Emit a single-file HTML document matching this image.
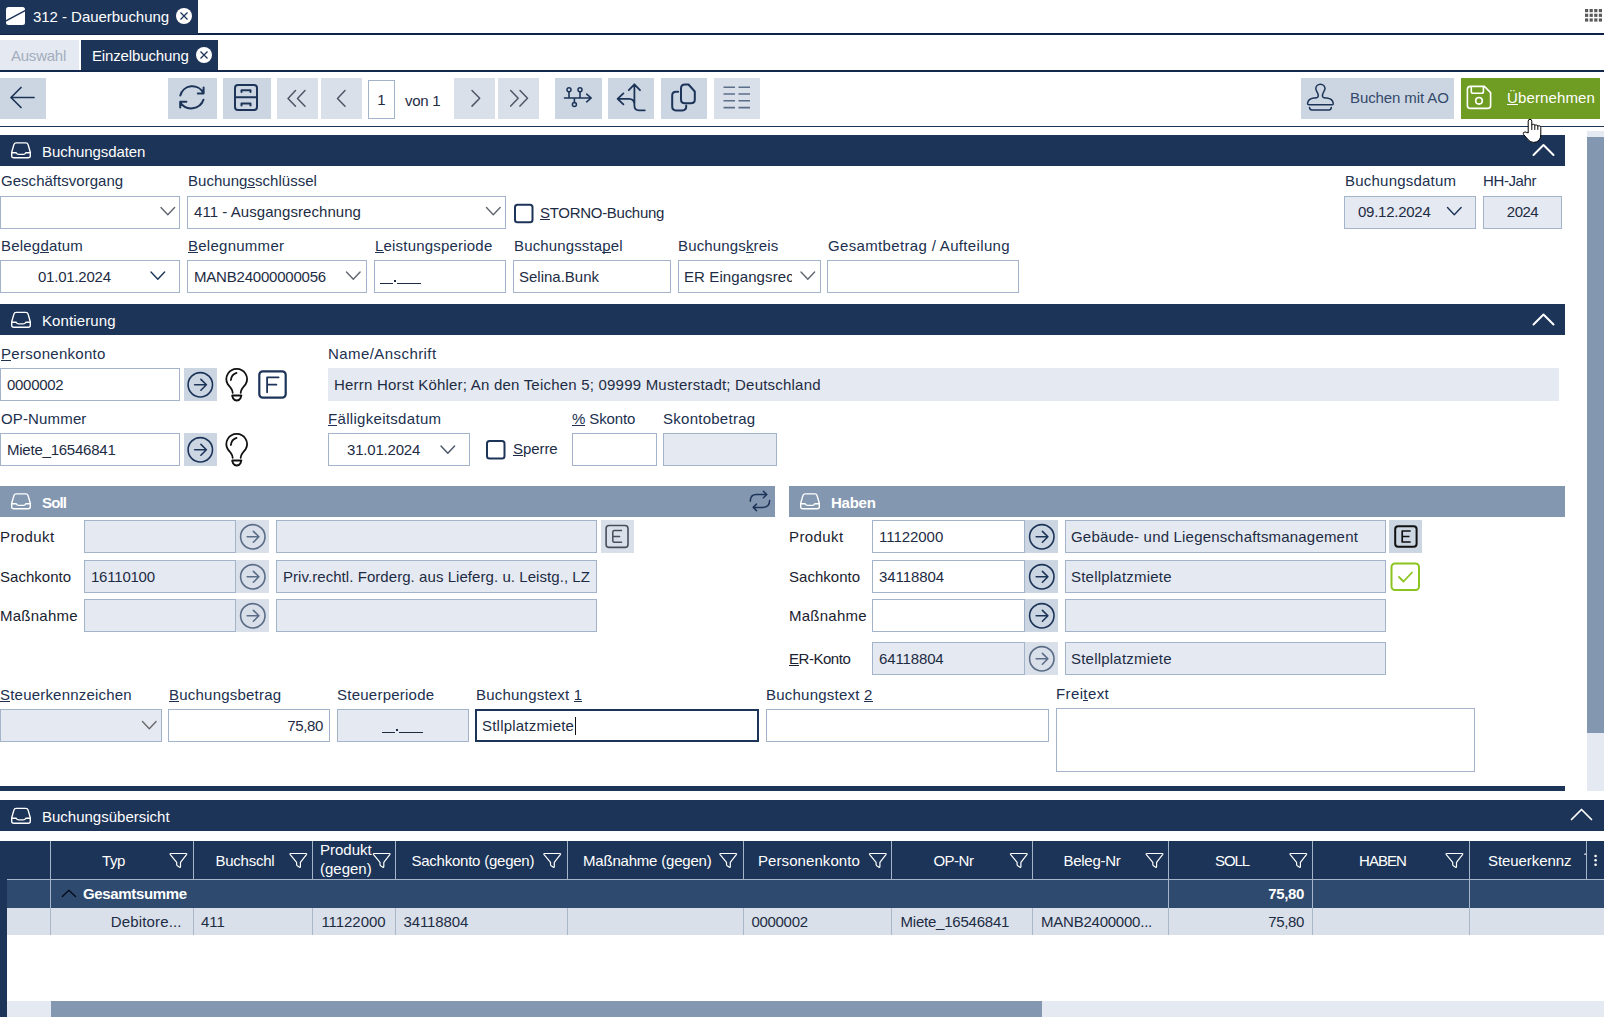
<!DOCTYPE html>
<html><head><meta charset="utf-8">
<style>
html,body{margin:0;padding:0;width:1610px;height:1025px;overflow:hidden;background:#fff;}
body{font-family:"Liberation Sans",sans-serif;font-size:15px;color:#1d2c44;position:relative;}
.a{position:absolute;}
.t{position:absolute;white-space:nowrap;line-height:17px;height:17px;}
.lbl{color:#20304e;}
.w{color:#fff;}
.nv{background:#1c3458;}
.inp{position:absolute;box-sizing:border-box;border:1px solid #a3b3c9;background:#fff;}
.dis{background:#e5e9f1;}
.btn{position:absolute;background:#ccd6e2;}
.btnl{position:absolute;background:#dae0e9;}
.u{background:linear-gradient(currentColor,currentColor) no-repeat 0 15px/100% 1px;}
svg{position:absolute;overflow:visible;}
</style></head><body>

<!-- top tab bar -->
<div class="a" style="left:0;top:33px;width:1604px;height:2px;background:#0c2247;"></div>
<div class="a nv" style="left:0;top:0;width:198px;height:34px;"></div>
<svg style="left:6px;top:7px" width="19" height="18" viewBox="0 0 19 18"><rect x="0" y="0" width="19" height="18" rx="2.5" fill="#fff"/><line x1="-1" y1="14.4" x2="20" y2="3.2" stroke="#1c3458" stroke-width="1.5"/></svg>
<div class="t w" style="left:33px;top:8px;letter-spacing:-0.04px;">312 - Dauerbuchung</div>
<svg style="left:176px;top:8px" width="16" height="16" viewBox="0 0 16 16"><circle cx="8" cy="8" r="8" fill="#fff"/><path d="M4.5 4.5L11.5 11.5M11.5 4.5L4.5 11.5" stroke="#1c3458" stroke-width="1.25"/></svg>
<svg style="left:1585px;top:9px" width="18" height="14" viewBox="0 0 18 14"><g fill="#5a5a5a"><rect x="0" y="0" width="3.2" height="3.2"/><rect x="4.6" y="0" width="3.2" height="3.2"/><rect x="9.2" y="0" width="3.2" height="3.2"/><rect x="13.8" y="0" width="3.2" height="3.2"/><rect x="0" y="4.7" width="3.2" height="3.2"/><rect x="4.6" y="4.7" width="3.2" height="3.2"/><rect x="9.2" y="4.7" width="3.2" height="3.2"/><rect x="13.8" y="4.7" width="3.2" height="3.2"/><rect x="0" y="9.4" width="3.2" height="3.2"/><rect x="4.6" y="9.4" width="3.2" height="3.2"/><rect x="9.2" y="9.4" width="3.2" height="3.2"/><rect x="13.8" y="9.4" width="3.2" height="3.2"/></g></svg>

<!-- second tab bar -->
<div class="a" style="left:0;top:40px;width:79px;height:30px;background:#e5e9f1;"></div>
<div class="t" style="left:11px;top:47px;color:#a2adbd;letter-spacing:-0.24px;">Auswahl</div>
<div class="a nv" style="left:81px;top:40px;width:137px;height:31px;"></div>
<div class="t w" style="left:92px;top:47px;letter-spacing:-0.14px;">Einzelbuchung</div>
<svg style="left:196px;top:47px" width="16" height="16" viewBox="0 0 16 16"><circle cx="8" cy="8" r="8" fill="#fff"/><path d="M4.5 4.5L11.5 11.5M11.5 4.5L4.5 11.5" stroke="#1c3458" stroke-width="1.25"/></svg>
<div class="a" style="left:0;top:70px;width:1604px;height:2px;background:#12284c;"></div>

<!-- toolbar -->
<div class="btn" style="left:0;top:78px;width:46px;height:41px;"></div>
<div class="btn" style="left:168px;top:78px;width:49px;height:41px;"></div>
<div class="btn" style="left:223px;top:78px;width:48px;height:41px;"></div>
<div class="btnl" style="left:277px;top:78px;width:41px;height:41px;"></div>
<div class="btnl" style="left:321px;top:78px;width:41px;height:41px;"></div>
<div class="inp" style="left:368px;top:80px;width:27px;height:39px;"></div>
<div class="t" style="left:368px;top:91px;width:27px;text-align:center;">1</div>
<div class="t" style="left:405px;top:92px;letter-spacing:-0.26px;">von 1</div>
<div class="btnl" style="left:454px;top:78px;width:41px;height:41px;"></div>
<div class="btnl" style="left:498px;top:78px;width:41px;height:41px;"></div>
<div class="btn" style="left:555px;top:78px;width:47px;height:41px;"></div>
<div class="btn" style="left:608px;top:78px;width:46px;height:41px;"></div>
<div class="btn" style="left:661px;top:78px;width:46px;height:41px;"></div>
<div class="btnl" style="left:714px;top:78px;width:46px;height:41px;"></div>
<div class="btn" style="left:1301px;top:78px;width:153px;height:41px;"></div>
<div class="t" style="left:1350px;top:89px;color:#34496a;letter-spacing:-0.10px;">Buchen mit AO</div>
<div class="a" style="left:1461px;top:78px;width:139px;height:41px;background:#6f9c22;"></div>
<div class="t w" style="left:1507px;top:89px;letter-spacing:0.13px;"><span class="u">Ü</span>bernehmen</div>
<div class="a" style="left:0;top:126px;width:1604px;height:1px;background:#1c3458;"></div>

<!-- ===== Buchungsdaten ===== -->
<div class="a nv" style="left:0;top:135px;width:1565px;height:31px;"></div>
<div class="t w" style="left:42px;top:143px;letter-spacing:-0.07px;">Buchungsdaten</div>
<div class="t lbl" style="left:1px;top:172px;letter-spacing:0.03px;">Geschäftsvorgang</div>
<div class="t lbl" style="left:188px;top:172px;letter-spacing:0.03px;">Buchung<span class="u">s</span>schlüssel</div>
<div class="t lbl" style="left:1345px;top:172px;letter-spacing:0.22px;">Buchungsdatum</div>
<div class="t lbl" style="left:1483px;top:172px;letter-spacing:-0.39px;">HH-Jahr</div>
<div class="inp" style="left:0;top:196px;width:180px;height:33px;"></div>
<div class="inp" style="left:187px;top:196px;width:319px;height:33px;"></div>
<div class="t" style="left:194px;top:203px;letter-spacing:0.06px;">411 - Ausgangsrechnung</div>
<div class="t" style="left:540px;top:204px;letter-spacing:-0.29px;"><span class="u">S</span>TORNO-Buchung</div>
<div class="inp dis" style="left:1344px;top:196px;width:132px;height:33px;"></div>
<div class="t" style="left:1358px;top:203px;letter-spacing:-0.26px;">09.12.2024</div>
<div class="inp dis" style="left:1483px;top:196px;width:79px;height:33px;"></div>
<div class="t" style="left:1483px;top:203px;width:79px;text-align:center;letter-spacing:-0.52px;">2024</div>

<div class="t lbl" style="left:1px;top:237px;letter-spacing:0.20px;">Beleg<span class="u">d</span>atum</div>
<div class="t lbl" style="left:188px;top:237px;letter-spacing:0.26px;"><span class="u">B</span>elegnummer</div>
<div class="t lbl" style="left:375px;top:237px;letter-spacing:0.20px;"><span class="u">L</span>eistungsperiode</div>
<div class="t lbl" style="left:514px;top:237px;letter-spacing:0.14px;">Buchungssta<span class="u">p</span>el</div>
<div class="t lbl" style="left:678px;top:237px;letter-spacing:0.15px;">Buchungs<span class="u">k</span>reis</div>
<div class="t lbl" style="left:828px;top:237px;letter-spacing:0.34px;">Gesamtbetrag / Aufteilung</div>
<div class="inp" style="left:0;top:260px;width:180px;height:33px;"></div>
<div class="t" style="left:38px;top:268px;letter-spacing:-0.23px;">01.01.2024</div>
<div class="inp" style="left:187px;top:260px;width:180px;height:33px;"></div>
<div class="t" style="left:194px;top:268px;letter-spacing:-0.21px;">MANB24000000056</div>
<div class="inp" style="left:374px;top:260px;width:132px;height:33px;"></div>
<div class="a" style="left:380.3px;top:283px;width:12.300000000000011px;height:1px;background:#1d2c44;"></div><div class="a" style="left:394px;top:280px;width:2px;height:2px;background:#1d2c44;"></div><div class="a" style="left:396.6px;top:283px;width:24.5px;height:1px;background:#1d2c44;"></div>
<div class="inp" style="left:513px;top:260px;width:158px;height:33px;"></div>
<div class="t" style="left:519px;top:268px;">Selina.Bunk</div>
<div class="inp" style="left:678px;top:260px;width:143px;height:33px;"></div>
<div class="t" style="left:684px;top:268px;width:108px;overflow:hidden;letter-spacing:0.1px;">ER Eingangsrechnung</div>
<div class="inp" style="left:827px;top:260px;width:192px;height:33px;"></div>
<!-- scrollbar right -->
<div class="a" style="left:1587px;top:131px;width:17px;height:660px;background:#e5e9f1;"></div>
<div class="a" style="left:1587px;top:137px;width:17px;height:596px;background:#8497b1;"></div>

<!-- ===== Kontierung ===== -->
<div class="a nv" style="left:0;top:304px;width:1565px;height:31px;"></div>
<div class="t w" style="left:42px;top:312px;letter-spacing:0.12px;">Kontierung</div>
<div class="t lbl" style="left:1px;top:345px;letter-spacing:0.29px;"><span class="u">P</span>ersonenkonto</div>
<div class="t lbl" style="left:328px;top:345px;letter-spacing:0.43px;">Name/Anschrift</div>
<div class="inp" style="left:0;top:368px;width:180px;height:33px;"></div>
<div class="t" style="left:7px;top:376px;letter-spacing:-0.29px;">0000002</div>
<div class="btn" style="left:184px;top:368px;width:33px;height:33px;"></div>
<div class="a dis" style="left:328px;top:368px;width:1231px;height:33px;"></div>
<div class="t" style="left:334px;top:376px;letter-spacing:0.21px;">Herrn Horst Köhler; An den Teichen 5; 09999 Musterstadt; Deutschland</div>
<div class="t lbl" style="left:1px;top:410px;letter-spacing:0.15px;">OP-Nummer</div>
<div class="t lbl" style="left:328px;top:410px;letter-spacing:0.31px;"><span class="u">F</span>älligkeitsdatum</div>
<div class="t lbl" style="left:572px;top:410px;letter-spacing:-0.13px;"><span class="u">%</span> Skonto</div>
<div class="t lbl" style="left:663px;top:410px;letter-spacing:0.26px;">Skontobetrag</div>
<div class="inp" style="left:0;top:433px;width:180px;height:33px;"></div>
<div class="t" style="left:7px;top:441px;letter-spacing:-0.23px;">Miete_16546841</div>
<div class="btn" style="left:184px;top:433px;width:33px;height:33px;"></div>
<div class="inp" style="left:328px;top:433px;width:142px;height:33px;"></div>
<div class="t" style="left:347px;top:441px;letter-spacing:-0.19px;">31.01.2024</div>
<div class="t" style="left:513px;top:440px;letter-spacing:-0.07px;"><span class="u">S</span>perre</div>
<div class="inp" style="left:572px;top:433px;width:85px;height:33px;"></div>
<div class="inp dis" style="left:663px;top:433px;width:114px;height:33px;"></div>

<!-- ===== Soll / Haben ===== -->
<div class="a" style="left:0;top:486px;width:775px;height:31px;background:#8497b1;"></div>
<div class="t w" style="left:42px;top:494px;font-weight:bold;letter-spacing:-0.83px;">Soll</div>
<div class="a" style="left:789px;top:486px;width:776px;height:31px;background:#8497b1;"></div>
<div class="t w" style="left:831px;top:494px;font-weight:bold;letter-spacing:-0.25px;">Haben</div>
<div class="t" style="left:0;top:528px;color:#1a2230;letter-spacing:0.40px;">Produkt</div>
<div class="inp dis" style="left:84px;top:520px;width:152px;height:33px;"></div>
<div class="btnl" style="left:236px;top:520px;width:33px;height:33px;"></div>
<div class="inp dis" style="left:276px;top:520px;width:321px;height:33px;"></div>
<div class="t" style="left:789px;top:528px;color:#1a2230;letter-spacing:0.40px;">Produkt</div>
<div class="inp" style="left:872px;top:520px;width:153px;height:33px;"></div>
<div class="btn" style="left:1025px;top:520px;width:33px;height:33px;"></div>
<div class="inp dis" style="left:1065px;top:520px;width:321px;height:33px;"></div>
<div class="t" style="left:0;top:568px;color:#1a2230;letter-spacing:0.03px;">Sachkonto</div>
<div class="inp dis" style="left:84px;top:560px;width:152px;height:33px;"></div>
<div class="btnl" style="left:236px;top:560px;width:33px;height:33px;"></div>
<div class="inp dis" style="left:276px;top:560px;width:321px;height:33px;"></div>
<div class="t" style="left:789px;top:568px;color:#1a2230;letter-spacing:0.03px;">Sachkonto</div>
<div class="inp" style="left:872px;top:560px;width:153px;height:33px;"></div>
<div class="btn" style="left:1025px;top:560px;width:33px;height:33px;"></div>
<div class="inp dis" style="left:1065px;top:560px;width:321px;height:33px;"></div>
<div class="t" style="left:0;top:607px;color:#1a2230;letter-spacing:0.24px;">Maßnahme</div>
<div class="inp dis" style="left:84px;top:599px;width:152px;height:33px;"></div>
<div class="btnl" style="left:236px;top:599px;width:33px;height:33px;"></div>
<div class="inp dis" style="left:276px;top:599px;width:321px;height:33px;"></div>
<div class="t" style="left:789px;top:607px;color:#1a2230;letter-spacing:0.24px;">Maßnahme</div>
<div class="inp" style="left:872px;top:599px;width:153px;height:33px;"></div>
<div class="btn" style="left:1025px;top:599px;width:33px;height:33px;"></div>
<div class="inp dis" style="left:1065px;top:599px;width:321px;height:33px;"></div>
<div class="btnl" style="left:601px;top:520px;width:33px;height:33px;"></div>
<div class="t" style="left:91px;top:568px;letter-spacing:-0.22px;">16110100</div>
<div class="t" style="left:283px;top:568px;letter-spacing:0.06px;">Priv.rechtl. Forderg. aus Lieferg. u. Leistg., LZ</div>
<div class="t" style="left:879px;top:528px;letter-spacing:-0.04px;">11122000</div>
<div class="t" style="left:879px;top:568px;letter-spacing:-0.08px;">34118804</div>
<div class="t" style="left:1071px;top:528px;letter-spacing:0.19px;">Gebäude- und Liegenschaftsmanagement</div>
<div class="t" style="left:1071px;top:568px;letter-spacing:0.21px;">Stellplatzmiete</div>
<div class="btn" style="left:1389px;top:520px;width:33px;height:33px;"></div>
<div class="t" style="left:789px;top:650px;color:#1a2230;letter-spacing:-0.47px;"><span class="u">E</span>R-Konto</div>
<div class="inp dis" style="left:872px;top:642px;width:153px;height:33px;"></div>
<div class="btnl" style="left:1025px;top:642px;width:33px;height:33px;"></div>
<div class="inp dis" style="left:1065px;top:642px;width:321px;height:33px;"></div>
<div class="t" style="left:879px;top:650px;letter-spacing:-0.13px;">64118804</div>
<div class="t" style="left:1071px;top:650px;letter-spacing:0.21px;">Stellplatzmiete</div>

<!-- bottom row -->
<div class="t lbl" style="left:0;top:686px;letter-spacing:0.20px;"><span class="u">S</span>teuerkennzeichen</div>
<div class="t lbl" style="left:169px;top:686px;letter-spacing:0.22px;"><span class="u">B</span>uchungsbetrag</div>
<div class="t lbl" style="left:337px;top:686px;letter-spacing:0.24px;">Steuerperiode</div>
<div class="t lbl" style="left:476px;top:686px;letter-spacing:0.21px;">Buchungstext <span class="u">1</span></div>
<div class="t lbl" style="left:766px;top:686px;letter-spacing:0.23px;">Buchungstext <span class="u">2</span></div>
<div class="t lbl" style="left:1056px;top:685px;letter-spacing:0.38px;">Frei<span class="u">t</span>ext</div>
<div class="inp dis" style="left:0;top:709px;width:162px;height:33px;"></div>
<div class="inp" style="left:168px;top:709px;width:162px;height:33px;"></div>
<div class="t" style="left:168px;top:717px;width:155px;text-align:right;letter-spacing:-0.37px;">75,80</div>
<div class="inp dis" style="left:337px;top:709px;width:132px;height:33px;"></div>
<div class="a" style="left:382.3px;top:732px;width:12.300000000000011px;height:1px;background:#1d2c44;"></div><div class="a" style="left:395.8px;top:729px;width:2px;height:2px;background:#1d2c44;"></div><div class="a" style="left:398.6px;top:732px;width:24.5px;height:1px;background:#1d2c44;"></div>
<div class="inp" style="left:475px;top:709px;width:284px;height:33px;border:2px solid #1c3458;"></div>
<div class="t" style="left:482px;top:717px;letter-spacing:0.21px;">Stllplatzmiete<span style="display:inline-block;width:1px;height:18px;background:#111;vertical-align:-4px;margin-left:1px;"></span></div>
<div class="inp" style="left:766px;top:709px;width:283px;height:33px;"></div>
<div class="inp" style="left:1056px;top:708px;width:419px;height:64px;"></div>
<div class="a nv" style="left:0;top:786px;width:1565px;height:5px;"></div>

<!-- ===== Buchungsuebersicht ===== -->
<div class="a nv" style="left:0;top:800px;width:1604px;height:31px;"></div>
<div class="t w" style="left:42px;top:808px;">Buchungsübersicht</div>
<div class="a nv" style="left:0;top:841px;width:1604px;height:38px;"></div>
<div class="a nv" style="left:0;top:879px;width:7px;height:138px;"></div>
<div class="a" style="left:7px;top:879px;width:1597px;height:29px;background:#2e4a6e;"></div>
<div class="a" style="left:7px;top:908px;width:1597px;height:27px;background:#d9e0ea;"></div>
<div class="a" style="left:7px;top:1001px;width:44px;height:16px;background:#e5e9f1;"></div>
<div class="a" style="left:51px;top:1001px;width:991px;height:16px;background:#8497b1;"></div>
<div class="a" style="left:1042px;top:1001px;width:562px;height:16px;background:#e5e9f1;"></div>
<div class="a" style="left:7px;top:879px;width:1597px;height:1px;background:#a6b5c9;"></div>
<div class="a" style="left:49.5px;top:841px;width:1px;height:38px;background:#a6b5c9;"></div>
<div class="a" style="left:49.5px;top:908px;width:1px;height:27px;background:#a9b7c9;"></div>
<div class="a" style="left:193.2px;top:841px;width:1px;height:38px;background:#a6b5c9;"></div>
<div class="a" style="left:193.2px;top:908px;width:1px;height:27px;background:#a9b7c9;"></div>
<div class="a" style="left:311.5px;top:841px;width:1px;height:38px;background:#a6b5c9;"></div>
<div class="a" style="left:311.5px;top:908px;width:1px;height:27px;background:#a9b7c9;"></div>
<div class="a" style="left:394.5px;top:841px;width:1px;height:38px;background:#a6b5c9;"></div>
<div class="a" style="left:394.5px;top:908px;width:1px;height:27px;background:#a9b7c9;"></div>
<div class="a" style="left:566.9px;top:841px;width:1px;height:38px;background:#a6b5c9;"></div>
<div class="a" style="left:566.9px;top:908px;width:1px;height:27px;background:#a9b7c9;"></div>
<div class="a" style="left:742.9px;top:841px;width:1px;height:38px;background:#a6b5c9;"></div>
<div class="a" style="left:742.9px;top:908px;width:1px;height:27px;background:#a9b7c9;"></div>
<div class="a" style="left:890.9px;top:841px;width:1px;height:38px;background:#a6b5c9;"></div>
<div class="a" style="left:890.9px;top:908px;width:1px;height:27px;background:#a9b7c9;"></div>
<div class="a" style="left:1031.8px;top:841px;width:1px;height:38px;background:#a6b5c9;"></div>
<div class="a" style="left:1031.8px;top:908px;width:1px;height:27px;background:#a9b7c9;"></div>
<div class="a" style="left:1168.1px;top:841px;width:1px;height:38px;background:#a6b5c9;"></div>
<div class="a" style="left:1168.1px;top:908px;width:1px;height:27px;background:#a9b7c9;"></div>
<div class="a" style="left:1311.8px;top:841px;width:1px;height:38px;background:#a6b5c9;"></div>
<div class="a" style="left:1311.8px;top:908px;width:1px;height:27px;background:#a9b7c9;"></div>
<div class="a" style="left:1468.9px;top:841px;width:1px;height:38px;background:#a6b5c9;"></div>
<div class="a" style="left:1468.9px;top:908px;width:1px;height:27px;background:#a9b7c9;"></div>
<div class="a" style="left:1585.7px;top:841px;width:1px;height:38px;background:#a6b5c9;"></div>
<div class="a" style="left:49.5px;top:880px;width:1px;height:28px;background:#a6b5c9;"></div>
<div class="a" style="left:1168.1px;top:880px;width:1px;height:28px;background:#a6b5c9;"></div>
<div class="a" style="left:1311.8px;top:880px;width:1px;height:28px;background:#a6b5c9;"></div>
<div class="a" style="left:1468.9px;top:880px;width:1px;height:28px;background:#a6b5c9;"></div>
<div class="t w" style="left:102px;top:852px;letter-spacing:-0.40px;">Typ</div>
<div class="t w" style="left:215.5px;top:852px;letter-spacing:-0.25px;">Buchschl</div>
<div class="t w" style="left:411.4px;top:852px;letter-spacing:-0.23px;">Sachkonto (gegen)</div>
<div class="t w" style="left:583px;top:852px;letter-spacing:-0.20px;">Maßnahme (gegen)</div>
<div class="t w" style="left:758px;top:852px;letter-spacing:0.08px;">Personenkonto</div>
<div class="t w" style="left:933.4px;top:852px;letter-spacing:-0.50px;">OP-Nr</div>
<div class="t w" style="left:1063.4px;top:852px;letter-spacing:-0.25px;">Beleg-Nr</div>
<div class="t w" style="left:1215px;top:852px;letter-spacing:-1.09px;">SOLL</div>
<div class="t w" style="left:1359px;top:852px;letter-spacing:-0.94px;">HABEN</div>
<div class="t w" style="left:1488px;top:852px;letter-spacing:-0.08px;">Steuerkennz</div>
<div class="t w" style="left:320px;top:841px;line-height:18.5px;height:38px;">Produkt<br>(gegen)</div>
<div class="t w" style="left:83px;top:885px;font-weight:bold;letter-spacing:-0.34px;">Gesamtsumme</div>
<div class="t w" style="left:1168px;top:885px;width:136px;text-align:right;font-weight:bold;letter-spacing:-0.37px;">75,80</div>
<div class="t" style="left:50px;top:913px;width:131.7px;text-align:right;letter-spacing:0.16px;">Debitore...</div>
<div class="t" style="left:201px;top:913px;">411</div>
<div class="t" style="left:321.4px;top:913px;letter-spacing:-0.04px;">11122000</div>
<div class="t" style="left:403.4px;top:913px;letter-spacing:-0.08px;">34118804</div>
<div class="t" style="left:751.4px;top:913px;letter-spacing:-0.29px;">0000002</div>
<div class="t" style="left:900.6px;top:913px;letter-spacing:-0.23px;">Miete_16546841</div>
<div class="t" style="left:1041px;top:913px;letter-spacing:-0.23px;">MANB2400000...</div>
<div class="t" style="left:1168.6px;top:913px;width:135.4px;text-align:right;letter-spacing:-0.37px;">75,80</div>
<!-- FORM5 -->




<svg id="ov" style="left:0;top:0" width="1610" height="1025" viewBox="0 0 1610 1025" fill="none" stroke-linecap="round" stroke-linejoin="round">
<defs>
<g id="tray"><path d="M0.7 10.2L2.9 2.6Q3.4 0.9 5.2 0.9H14.8Q16.6 0.9 17.1 2.6L19.3 10.2V13.7Q19.3 15.7 17.3 15.7H2.7Q0.7 15.7 0.7 13.7ZM0.7 10.7H5.2Q6 12.4 7.6 12.4H12.4Q14 12.4 14.8 10.7H19.3" stroke-width="1.4"/></g>
<g id="dd"><path d="M0.5 0.5L7.3 7.7L14.1 0.5" stroke-width="1.4"/></g>
<g id="arr"><circle cx="13.3" cy="13.3" r="12.2" stroke-width="1.6"/><path d="M7.7 13.3H19.4M13.9 7.9L19.4 13.3L13.9 18.7" stroke-width="1.6"/></g>
<g id="bulb"><path d="M7.2 24.3Q7.2 22.3 5.5 19.8L2.2 15.6A10.3 10.3 0 1 1 20.2 15.6L16.9 19.8Q15.2 22.3 15.2 24.3M6.6 27H15.9L15 29.8Q13.8 32 11.25 32Q8.7 32 7.5 29.8ZM5.4 11.5Q6 6 11 4.4" stroke-width="1.8"/></g>
<g id="flt"><path d="M1.2 0.5H16.4Q17.7 0.5 16.9 1.6L10.9 9.3V13.6Q10.9 14.6 10 14.2L7.8 12.8Q7.1 12.3 7.1 11.5V9.3L0.7 1.6Q0 0.5 1.2 0.5Z" stroke-width="1.2"/></g>
</defs>
<use href="#tray" x="11" y="142" stroke="#fff"/>
<path d="M1533.5 155L1543.5 145L1553.5 155" stroke="#fff" stroke-width="2"/>
<use href="#dd" x="160.5" y="207" stroke="#606670"/>
<use href="#dd" x="486" y="207" stroke="#606670"/>
<use href="#dd" x="150.5" y="271.5" stroke="#1c3458"/>
<use href="#dd" x="346" y="271.5" stroke="#606670"/>
<use href="#dd" x="800.5" y="271.5" stroke="#606670"/>
<use href="#dd" x="1447" y="207" stroke="#1c3458"/>
<rect x="515" y="204.7" width="17.5" height="17.5" rx="2.5" stroke="#1c3458" stroke-width="2"/>
<use href="#tray" x="11" y="311.5" stroke="#fff"/>
<path d="M1533.5 324.5L1543.5 314.5L1553.5 324.5" stroke="#fff" stroke-width="2"/>
<use href="#arr" x="187" y="371.5" stroke="#1c3458"/>
<use href="#arr" x="187" y="436.5" stroke="#1c3458"/>
<use href="#bulb" x="225.5" y="368.5" stroke="#111"/>
<use href="#bulb" x="225.5" y="433.5" stroke="#111"/>
<rect x="259.3" y="371.3" width="26.4" height="26.4" rx="3.5" stroke="#1c3458" stroke-width="2.2"/>
<path d="M267.1 392.3V377.3H278.6M267.1 384.7H276.4" stroke="#1c3458" stroke-width="1.8" stroke-linecap="round"/>
<use href="#dd" x="440.5" y="445.5" stroke="#4a5568"/>
<rect x="487" y="441" width="17.5" height="17.5" rx="2.5" stroke="#1c3458" stroke-width="2"/>
<use href="#tray" x="11" y="493" stroke="#fff"/>
<use href="#tray" x="800" y="493" stroke="#fff"/>
<use href="#arr" x="239.5" y="523.5" stroke="#5b6d88"/>
<use href="#arr" x="239.5" y="563.5" stroke="#5b6d88"/>
<use href="#arr" x="239.5" y="602.5" stroke="#5b6d88"/>
<use href="#arr" x="1028.5" y="523.5" stroke="#1c3458"/>
<use href="#arr" x="1028.5" y="563.5" stroke="#1c3458"/>
<use href="#arr" x="1028.5" y="602.5" stroke="#1c3458"/>
<use href="#arr" x="1028.5" y="645.5" stroke="#5b6d88"/>
<rect x="606.1" y="525.5" width="21.9" height="21.9" rx="3" stroke="#464e5c" stroke-width="1.6"/>
<path d="M621.5 530.4H614.3Q612.8 530.4 612.8 531.9V540.8Q612.8 542.3 614.3 542.3H621.5M612.8 536.5H619.6" stroke="#464e5c" stroke-width="1.5"/>
<rect x="1395.2" y="526.3" width="21.4" height="20.4" rx="3" stroke="#111" stroke-width="2"/>
<path d="M1410.7 531H1402.2V542H1410.7M1402.2 536.5H1409.5" stroke="#111" stroke-width="1.7" stroke-linecap="butt"/>
<rect x="1391.5" y="563.5" width="27.5" height="26.5" rx="3.5" stroke="#8cc41f" stroke-width="2"/>
<path d="M1399 577L1403.5 581.5L1412 572.5" stroke="#8cc41f" stroke-width="1.8"/>
<path d="M750.3 501.2C750.3 497 752.5 494.5 756.5 494.5H766.8M763.4 491.3L766.8 494.5L763.4 497.7M769.6 500.6C769.6 504.5 767.5 507.4 763 507.4H753.2M756.5 504.1L753.2 507.4L756.5 510.6" stroke="#1c3458" stroke-width="1.5"/>
<use href="#dd" x="142" y="721" stroke="#6a6a6a"/>
<use href="#tray" x="11" y="807.5" stroke="#fff"/>
<path d="M1571.5 819.5L1581.5 809.5L1591.5 819.5" stroke="#fff" stroke-width="1.7"/>
<use href="#flt" x="169.6" y="853" stroke="#fff"/>
<use href="#flt" x="289.5" y="853" stroke="#fff"/>
<use href="#flt" x="372.9" y="853" stroke="#fff"/>
<use href="#flt" x="543.4" y="853" stroke="#fff"/>
<use href="#flt" x="719.4" y="853" stroke="#fff"/>
<use href="#flt" x="869" y="853" stroke="#fff"/>
<use href="#flt" x="1010" y="853" stroke="#fff"/>
<use href="#flt" x="1145.7" y="853" stroke="#fff"/>
<use href="#flt" x="1289.5" y="853" stroke="#fff"/>
<use href="#flt" x="1445.6" y="853" stroke="#fff"/>
<path d="M1584.8 854.2H1585.6" stroke="#fff" stroke-width="1.2"/>
<circle cx="1595.6" cy="856" r="1.3" fill="#fff" stroke="none"/><circle cx="1595.6" cy="860.3" r="1.3" fill="#fff" stroke="none"/><circle cx="1595.6" cy="864.7" r="1.3" fill="#fff" stroke="none"/>
<path d="M62.4 896.4L68.9 890.2L75.5 896.4" stroke="#050c1c" stroke-width="1.4"/>
<!-- ICONS5 -->



<!-- back arrow -->
<path d="M11 97.5H34M21 87.5L11 97.5L21 107.5" stroke="#1c3458" stroke-width="1.7"/>
<!-- refresh -->
<path d="M180.3 95.6A12.4 12.4 0 0 1 203.5 93.2M197.8 93.4H203.6V87.4M203.5 99.7A13 13 0 0 1 180.2 102.3M186.4 101.7H180.2V107.4" stroke="#1c3458" stroke-width="2"/>
<!-- cabinet -->
<rect x="235" y="85" width="22" height="25" rx="3" stroke="#1c3458" stroke-width="2"/>
<path d="M235 97.3H257M241.5 92V90.2H250.5V92M241.5 105.5V103.6H250.5V105.5" stroke="#1c3458" stroke-width="2"/>
<!-- << < > >> -->
<path d="M295.5 90.5L288 98.4L295.5 106.3M305 90.5L297.5 98.4L305 106.3" stroke="#4c5666" stroke-width="1.5"/>
<path d="M345 90.5L337.5 98.4L345 106.3" stroke="#4c5666" stroke-width="1.5"/>
<path d="M472 90.5L479.7 98.3L472 106.1" stroke="#4c5666" stroke-width="1.5"/>
<path d="M510.7 90.5L518.2 98.3L510.7 106.1M520 90.5L527.5 98.3L520 106.1" stroke="#4c5666" stroke-width="1.5"/>
<!-- branch -->
<path d="M564.5 98H591.2M586.7 94.2L591.2 98L586.7 101.8M569 98V91.8M580 98V91.8M574.4 98V102.6" stroke="#1c3458" stroke-width="1.6"/>
<circle cx="569" cy="89.8" r="2" stroke="#1c3458" stroke-width="1.5"/>
<circle cx="580" cy="89.8" r="2" stroke="#1c3458" stroke-width="1.5"/>
<circle cx="574.4" cy="104.6" r="2" stroke="#1c3458" stroke-width="1.5"/>
<!-- fork -->
<path d="M623.4 93.4L617.6 98.8L623.4 104.3M617.6 98.8H629C632.5 98.8 634.4 101 634.4 104.5V105.5C634.4 108.5 636 110.3 639 110.3H644.8M634.4 104.5V84.5M628.8 90.2L634.4 84.4L640 90.2" stroke="#1c3458" stroke-width="1.8"/>
<!-- copy -->
<path d="M685 84.5H688.5L694.8 91.5V99.5C694.8 101.8 693.2 103.3 691 103.3H684.8C682.5 103.3 681 101.8 681 99.5V88.3C681 86 682.5 84.5 685 84.5Z" stroke="#1c3458" stroke-width="2"/>
<path d="M678.2 91.7H676C673.8 91.7 672.2 93.3 672.2 95.5V106.6C672.2 108.8 673.8 110.4 676 110.4H682.4C684.6 110.4 686.2 108.8 686.2 106.6V105.5" stroke="#1c3458" stroke-width="2"/>
<!-- list -->
<path d="M723.5 87.3H735M738.5 87.3H750M723.5 94H735M738.5 94H750M723.5 100.8H735M738.5 100.8H750M723.5 107.6H735M738.5 107.6H750" stroke="#5b6e8a" stroke-width="1.6" stroke-linecap="butt"/>
<!-- stamp -->
<path d="M1317.6 97.2C1318.6 96.2 1318.3 94.6 1317.7 93.2C1317 91.6 1315.8 90 1315.8 88.8A4.6 4.6 0 0 1 1325 88.8C1325 90 1323.6 91.6 1323 93.2C1322.4 94.6 1322.1 96.2 1323.1 97.2C1324 98 1325.5 97.9 1327 98.1C1330 98.5 1332.8 100.5 1333.2 103.2L1333.3 103.7Q1333 104.8 1331.8 104.8H1309Q1307.7 104.8 1307.5 103.7L1307.6 103.2C1308 100.5 1310.7 98.5 1313.7 98.1C1315.2 97.9 1316.7 98 1317.6 97.2ZM1309.5 107.4Q1309.8 110 1312 110H1329Q1331 110 1331.3 107.4" stroke="#1c3458" stroke-width="1.5"/>
<!-- save -->
<path d="M1470.4 86.4H1484.4L1490.6 92.6V105.4Q1490.6 108.4 1487.6 108.4H1470.4Q1467.4 108.4 1467.4 105.4V89.4Q1467.4 86.4 1470.4 86.4ZM1471.3 86.6V91.4Q1471.3 93.2 1473 93.2H1481.8Q1483.4 93.2 1483.4 91.4V86.6" stroke="#fff" stroke-width="1.6"/>
<circle cx="1479" cy="100.8" r="3.3" stroke="#fff" stroke-width="1.6"/>
<path d="M1528.2 132.5V121.2Q1528.2 119.3 1530 119.3Q1531.8 119.3 1531.8 121.2V124.8Q1532.5 124.3 1533.4 124.3Q1534.6 124.3 1534.8 125.2Q1535.5 125 1536.3 125Q1537.5 125 1537.8 126Q1538.5 125.8 1539.2 125.8Q1540.8 125.8 1540.8 127.6V134Q1540.8 142.4 1533.5 142.4Q1530 142.4 1527.5 139L1523.6 134.5Q1522.8 133.3 1523.8 132.3Q1525 131.5 1526.5 132.3Z" fill="#fff" stroke="#000" stroke-width="1"/>
<path d="M1531.8 124.8V129.5M1534.8 125.2V129.5M1537.8 126V129.5" stroke="#000" stroke-width="1"/>
</svg>
</body></html>
